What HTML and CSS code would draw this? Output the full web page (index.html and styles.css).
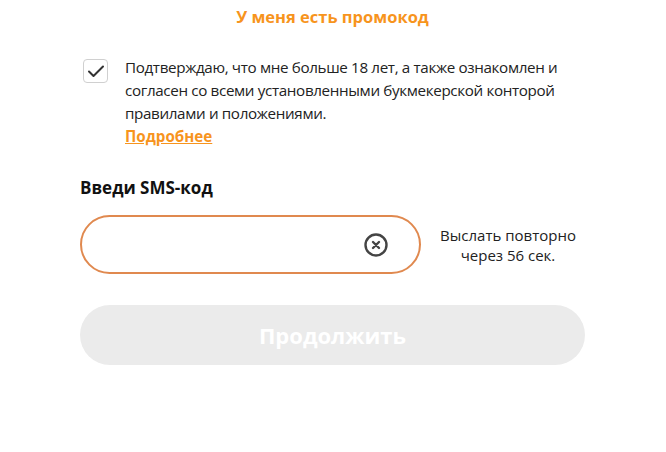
FILE: index.html
```html
<!DOCTYPE html>
<html lang="ru">
<head>
<meta charset="utf-8">
<link rel="stylesheet" href="styles.css">
</head>
<body>
<div class="page">
  <div class="promo">У меня есть промокод</div>
  <div class="agree">
    <div class="check">
      <svg width="18" height="14" viewBox="0 0 18 14"><path d="M2 7.5 L6.5 12 L16 2.5" fill="none" stroke="#333" stroke-width="2" stroke-linecap="round" stroke-linejoin="round"/></svg>
    </div>
    <div class="agree-text">
      <p>Подтверждаю, что мне больше 18 лет, а также ознакомлен и согласен со всеми установленными букмекерской конторой правилами и положениями.</p>
      <a class="more" href="#">Подробнее</a>
    </div>
  </div>
  <div class="label">Введи SMS-код</div>
  <div class="code-row">
    <div class="input">
      <svg class="clear" width="24" height="24" viewBox="0 0 24 24"><circle cx="12" cy="12" r="10.5" fill="none" stroke="#444" stroke-width="2.4"/><path d="M9 9 L15 15 M15 9 L9 15" stroke="#444" stroke-width="2.4" stroke-linecap="round"/></svg>
    </div>
    <div class="resend">Выслать повторно<br>через 56 сек.</div>
  </div>
  <button class="continue">Продолжить</button>
</div>
</body>
</html>
```
FILE: styles.css
```css
* { box-sizing: border-box; }
html, body { margin: 0; padding: 0; background: #fff; }
body { font-family: "Open Sans", "Noto Sans", sans-serif; color: #222; }
.page { width: 666px; padding: 6px 81px 0 80px; }
.promo { text-align: center; color: #f7941d; font-weight: 700; font-size: 16.5px; line-height: 22px; }
.agree { display: flex; align-items: flex-start; gap: 17px; margin-top: 28px; padding-left: 3px; }
.check { width: 25px; height: 24px; flex: none; border: 1px solid #d0d0d0; border-radius: 4px; display: flex; align-items: center; justify-content: center; margin-top: 3px; }
.agree-text { font-size: 15.2px; line-height: 23px; color: #222; }
.agree-text p { margin: 0; letter-spacing: -0.35px; }
.more { color: #f7941d; font-weight: 700; text-decoration: underline; }
.label { font-weight: 700; font-size: 17px; line-height: 22px; margin-top: 29px; color: #111; }
.code-row { display: flex; align-items: center; margin-top: 16px; }
.input { width: 341px; height: 59px; border: 2px solid #e0894f; border-radius: 30px; display: flex; align-items: center; justify-content: flex-end; padding-right: 31px; }
.resend { flex: 1; text-align: center; font-size: 15px; line-height: 20px; color: #222; padding-left: 10px; }
.continue { display: block; width: 505px; height: 60px; margin-top: 31px; border: 0; border-radius: 30px; background: #ebebeb; color: #fff; font-family: inherit; font-weight: 700; font-size: 22px; }
```
